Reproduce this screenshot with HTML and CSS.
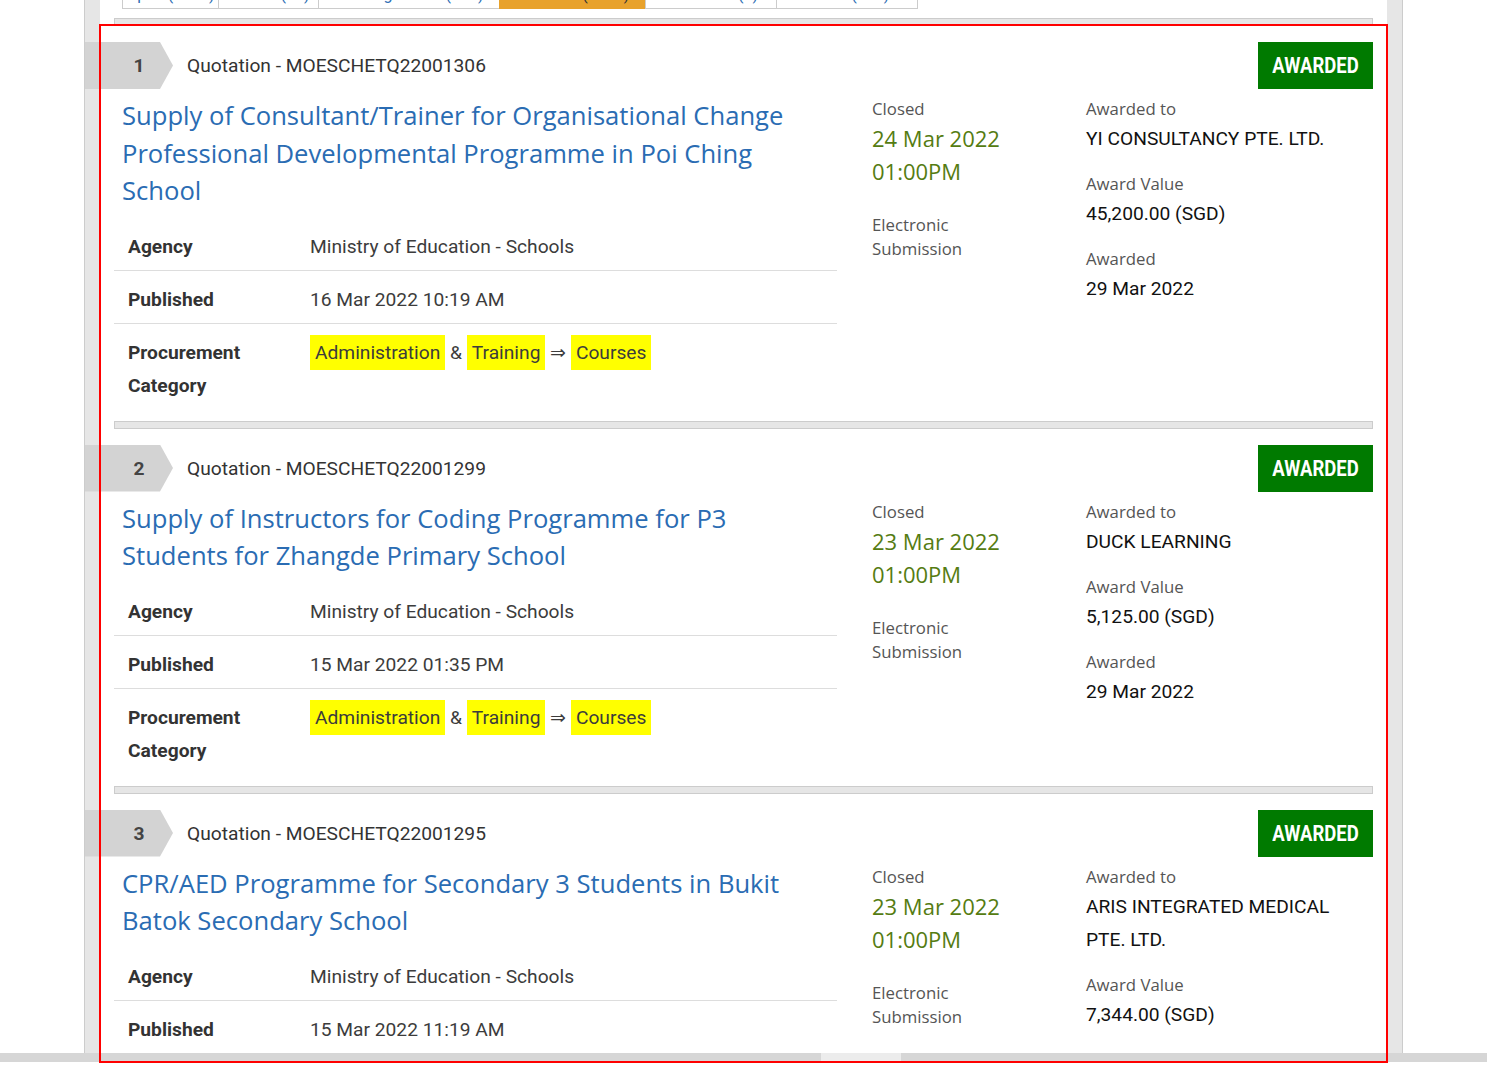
FILE: index.html
```html
<!DOCTYPE html>
<html lang="en">
<head>
<meta charset="utf-8">
<title>Quotations</title>
<link rel="stylesheet" href="styles.css">
</head>
<body>
<div class="page">
  <div class="frame">
    <div class="content">
      <div class="tabs">
        <div class="tab t1">Open (2456)</div>
        <div class="tab t2">Closed (45)</div>
        <div class="tab t3">Pending Award (132)</div>
        <div class="tab t4 active">Awarded (6820)</div>
        <div class="tab t5">Cancelled (8)</div>
        <div class="tab t6">Failed (127)</div>
      </div>
      <div class="sep sep-top"></div>

      <div class="entry">
        <div class="entry-head">
          <div class="num">1</div>
          <div class="ref">Quotation - MOESCHETQ22001306</div>
          <div class="status"><span>AWARDED</span></div>
        </div>
        <div class="entry-body">
          <div class="main">
            <h2 class="title">Supply of Consultant/Trainer for Organisational Change Professional Developmental Programme in Poi Ching School</h2>
            <table class="facts">
              <tr><td class="label">Agency</td><td>Ministry of Education - Schools</td></tr>
              <tr><td class="label">Published</td><td>16 Mar 2022 10:19 AM</td></tr>
              <tr><td class="label">Procurement Category</td><td><span class="hl">Administration</span> &amp; <span class="hl">Training</span> &rArr; <span class="hl">Courses</span></td></tr>
            </table>
          </div>
          <div class="mid">
            <div class="lbl">Closed</div>
            <div class="date">24 Mar 2022</div>
            <div class="date">01:00PM</div>
            <div class="lbl sub">Electronic<br>Submission</div>
          </div>
          <div class="side">
            <div class="lbl">Awarded to</div>
            <div class="val">YI CONSULTANCY PTE. LTD.</div>
            <div class="lbl gap">Award Value</div>
            <div class="val">45,200.00 (SGD)</div>
            <div class="lbl gap">Awarded</div>
            <div class="val">29 Mar 2022</div>
          </div>
        </div>
      </div>
      <div class="sep"></div>

      <div class="entry">
        <div class="entry-head">
          <div class="num">2</div>
          <div class="ref">Quotation - MOESCHETQ22001299</div>
          <div class="status"><span>AWARDED</span></div>
        </div>
        <div class="entry-body">
          <div class="main">
            <h2 class="title">Supply of Instructors for Coding Programme for P3 Students for Zhangde Primary School</h2>
            <table class="facts">
              <tr><td class="label">Agency</td><td>Ministry of Education - Schools</td></tr>
              <tr><td class="label">Published</td><td>15 Mar 2022 01:35 PM</td></tr>
              <tr><td class="label">Procurement Category</td><td><span class="hl">Administration</span> &amp; <span class="hl">Training</span> &rArr; <span class="hl">Courses</span></td></tr>
            </table>
          </div>
          <div class="mid">
            <div class="lbl">Closed</div>
            <div class="date">23 Mar 2022</div>
            <div class="date">01:00PM</div>
            <div class="lbl sub">Electronic<br>Submission</div>
          </div>
          <div class="side">
            <div class="lbl">Awarded to</div>
            <div class="val">DUCK LEARNING</div>
            <div class="lbl gap">Award Value</div>
            <div class="val">5,125.00 (SGD)</div>
            <div class="lbl gap">Awarded</div>
            <div class="val">29 Mar 2022</div>
          </div>
        </div>
      </div>
      <div class="sep"></div>

      <div class="entry">
        <div class="entry-head">
          <div class="num">3</div>
          <div class="ref">Quotation - MOESCHETQ22001295</div>
          <div class="status"><span>AWARDED</span></div>
        </div>
        <div class="entry-body">
          <div class="main">
            <h2 class="title">CPR/AED Programme for Secondary 3 Students in Bukit Batok Secondary School</h2>
            <table class="facts">
              <tr><td class="label">Agency</td><td>Ministry of Education - Schools</td></tr>
              <tr><td class="label">Published</td><td>15 Mar 2022 11:19 AM</td></tr>
              <tr><td class="label">Procurement Category</td><td><span class="hl">Administration</span> &amp; <span class="hl">Training</span> &rArr; <span class="hl">Courses</span></td></tr>
            </table>
          </div>
          <div class="mid">
            <div class="lbl">Closed</div>
            <div class="date">23 Mar 2022</div>
            <div class="date">01:00PM</div>
            <div class="lbl sub">Electronic<br>Submission</div>
          </div>
          <div class="side">
            <div class="lbl">Awarded to</div>
            <div class="val">ARIS INTEGRATED MEDICAL PTE. LTD.</div>
            <div class="lbl gap">Award Value</div>
            <div class="val">7,344.00 (SGD)</div>
            <div class="lbl gap">Awarded</div>
            <div class="val">28 Mar 2022</div>
          </div>
        </div>
      </div>
    </div>
  </div>
  <div class="hscroll"><div class="hthumb"></div></div>
  <div class="overlay"></div>
</div>
</body>
</html>
```

FILE: styles.css
```css
html, body {
  margin: 0;
  padding: 0;
  background: #ffffff;
}
body {
  font-family: Roboto, "Liberation Sans", sans-serif;
  color: #333333;
}
.page {
  position: relative;
  height: 1088px;
  overflow: hidden;
}
.frame {
  margin-left: 84px;
  width: 1287px;
  height: 1062px;
  padding: 0 15px;
  background: #e6e6e6;
  border-left: 1px solid #cccccc;
  border-right: 1px solid #cccccc;
  overflow: hidden;
}
.content {
  display: flow-root;
  background: #ffffff;
  height: 100%;
  padding: 0 14px;
}

/* tabs */
.tabs {
  display: flex;
  margin-left: 8px;
  margin-top: -31px;
  height: 40px;
}
.tab {
  box-sizing: border-box;
  height: 40px;
  border: 1px solid #cccccc;
  margin-left: -1px;
  padding-top: 14px;
  font-size: 16px;
  line-height: 22px;
  color: #2a6cb3;
  text-align: center;
  background: #ffffff;
  white-space: nowrap;
  overflow: hidden;
}
.tab:first-child { margin-left: 0; }
.t1 { width: 97px; }
.t2 { width: 101px; }
.t3 { width: 182px; }
.t4 { width: 147px; }
.t5 { width: 132px; }
.t6 { width: 142px; }
.tab.active {
  background: #e8a22c;
  border-color: #e8a22c;
  color: #333333;
}

/* separators */
.sep {
  box-sizing: border-box;
  height: 8px;
  border: 1px solid #cccccc;
  background: #e6e6e6;
  margin: 12px 0 16px;
}
.sep-top { margin-top: 9px; }

/* entry header */
.entry-head {
  display: flex;
  align-items: center;
  height: 47px;
}
.num {
  box-sizing: border-box;
  width: 89px;
  height: 47px;
  margin-left: -30px;
  padding-left: 21px;
  background: #d3d3d3;
  clip-path: polygon(0 0, 76px 0, 89px 50%, 76px 100%, 0 100%);
  display: flex;
  align-items: center;
  justify-content: center;
  font-size: 19.2px;
  font-weight: 700;
  color: #444444;
}
.ref {
  margin-left: 14px;
  font-size: 19.2px;
  color: #333333;
}
.status {
  margin-left: auto;
  width: 115px;
  height: 47px;
  background: #007a00;
  color: #ffffff;
  display: flex;
  align-items: center;
  justify-content: center;
  font-size: 22px;
  font-weight: 700;
}
.status span {
  display: inline-block;
  transform: scaleX(0.84);
}

/* entry body */
.entry-body {
  display: grid;
  grid-template-columns: 723px 249px 1fr;
  margin-top: 8px;
}
.title {
  margin: 0 0 0 8px;
  max-width: 700px;
  font-family: "Open Sans", "Liberation Sans", sans-serif;
  font-size: 25.6px;
  line-height: 37.5px;
  font-weight: 400;
  color: #2a6cb3;
}
.facts {
  width: 100%;
  border-collapse: collapse;
  margin-top: 8px;
}
.facts td {
  padding: 12px 14px 7px;
  line-height: 33px;
  font-size: 19.2px;
  vertical-align: top;
  color: #3c3c3c;
  border-bottom: 1px solid #dddddd;
}
.facts tr:last-child td { border-bottom: none; }
.facts td.label {
  width: 154px;
  font-weight: 700;
  color: #333333;
}
.hl {
  background: #ffff00;
  padding: 6px 5px;
}

.mid { padding-left: 35px; }
.side { padding-right: 20px; }
.lbl {
  font-family: "Open Sans", "Liberation Sans", sans-serif;
  font-size: 16.8px;
  line-height: 24px;
  color: #555555;
  margin-bottom: 1px;
}
.lbl.sub { margin-top: 25px; }
.lbl.gap { margin-top: 17px; }
.date {
  font-family: "Open Sans", "Liberation Sans", sans-serif;
  font-size: 22px;
  line-height: 33px;
  color: #557c12;
}
.val {
  font-size: 19.2px;
  line-height: 33px;
  color: #111111;
}

/* horizontal scrollbar */
.hscroll {
  position: absolute;
  left: 0;
  top: 1053px;
  width: 100%;
  height: 9px;
  background: #d6d6d6;
}
.hthumb {
  margin-left: 821px;
  width: 80px;
  height: 100%;
  background: #ececec;
}

/* annotation box */
.overlay {
  position: absolute;
  left: 99px;
  top: 24px;
  width: 1289px;
  height: 1039px;
  box-sizing: border-box;
  border: 2px solid #ff0000;
  pointer-events: none;
}
```
